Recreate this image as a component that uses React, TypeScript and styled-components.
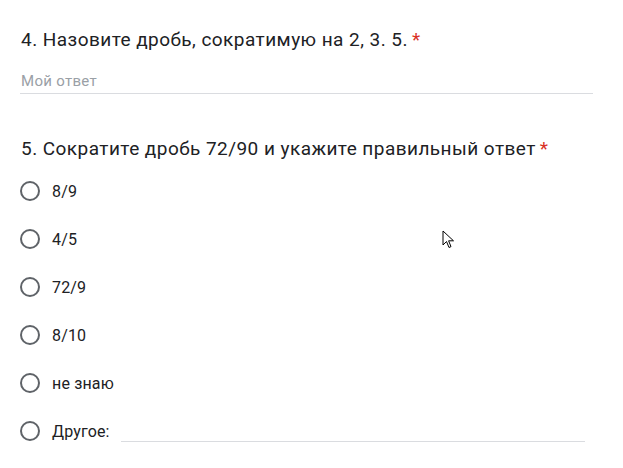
import React from "react";
import styled, { createGlobalStyle } from "styled-components";

const Global = createGlobalStyle`
  html, body { margin: 0; padding: 0; background: #fff; }
  body { font-family: Roboto, "Noto Sans", Arial, sans-serif; color: #202124; }
`;

const Page = styled.div`
  width: 623px;
  height: 468px;
  box-sizing: border-box;
  padding: 28px 31px 0 20px;
  position: relative;
  overflow: hidden;
`;

const Question = styled.section<{ $gap?: number }>`
  display: flex;
  flex-direction: column;
  margin-bottom: ${(p) => p.$gap ?? 0}px;
`;

const Title = styled.div`
  font-size: 19px;
  letter-spacing: 0.45px;
  line-height: 24px;
  color: #202124;
  padding-left: 1px;
`;

const Star = styled.span`
  color: #d93025;
  margin-left: 4px;
`;

const TextAnswer = styled.div`
  margin-top: 19px;
  width: 572px;
  font-size: 15px;
  letter-spacing: 0.3px;
  line-height: 20px;
  color: #9aa0a6;
  padding: 0 0 2px 1px;
  border-bottom: 1px solid #dadce0;
`;

const Options = styled.div`
  display: flex;
  flex-direction: column;
  margin-top: 6px;
`;

const Option = styled.label`
  display: flex;
  align-items: center;
  height: 48px;
`;

const Radio = styled.span`
  box-sizing: border-box;
  width: 20px;
  height: 20px;
  border: 2px solid #5f6368;
  border-radius: 50%;
  flex: none;
`;

const Label = styled.span`
  margin-left: 12px;
  font-size: 16px;
  letter-spacing: 0.15px;
  color: #202124;
`;

const OtherLine = styled.span`
  flex: none;
  width: 464px;
  margin-left: 11px;
  align-self: flex-end;
  margin-bottom: 13px;
  border-bottom: 1px solid #dadce0;
`;

const Cursor = styled.svg`
  position: absolute;
  left: 442px;
  top: 230px;
`;

const options = ["8/9", "4/5", "72/9", "8/10", "не знаю"];

export default function App() {
  return (
    <>
      <Global />
      <Page>
        <Question $gap={43}>
          <Title>
            4. Назовите дробь, сократимую на 2, 3. 5.<Star>*</Star>
          </Title>
          <TextAnswer>Мой ответ</TextAnswer>
        </Question>
        <Question>
          <Title>
            5. Сократите дробь 72/90 и укажите правильный ответ<Star>*</Star>
          </Title>
          <Options>
            {options.map((o) => (
              <Option key={o}>
                <Radio />
                <Label>{o}</Label>
              </Option>
            ))}
            <Option>
              <Radio />
              <Label>Другое:</Label>
              <OtherLine />
            </Option>
          </Options>
        </Question>
        <Cursor width="14" height="20" viewBox="0 0 14 20">
          <path
            d="M1 1 L1 15 L4.5 11.5 L7 17.5 L9 16.6 L6.6 10.8 L11.5 10.8 Z"
            fill="#fff"
            stroke="#000"
            strokeWidth="1"
            strokeLinejoin="miter"
          />
        </Cursor>
      </Page>
    </>
  );
}
